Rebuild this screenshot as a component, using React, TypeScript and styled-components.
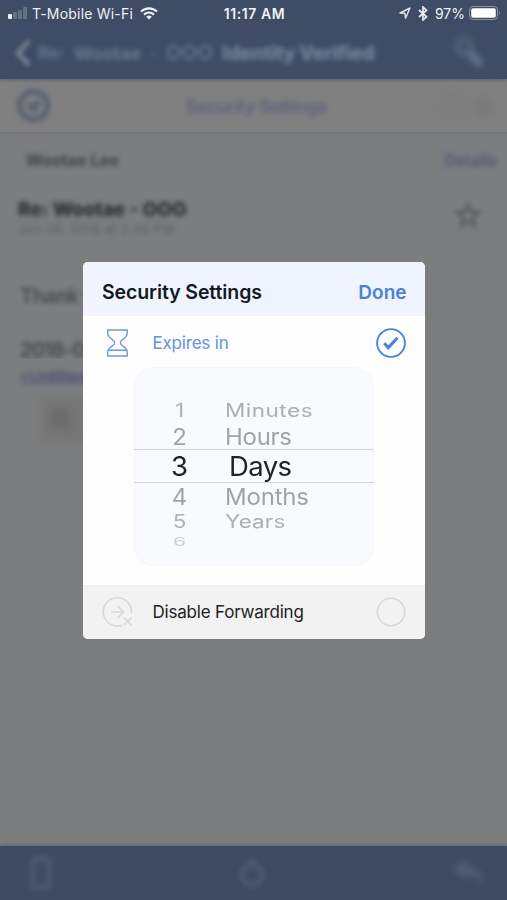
import React from "react";
import styled, { createGlobalStyle, css } from "styled-components";

const Global = createGlobalStyle`
  * { box-sizing: border-box; }
  html, body { margin: 0; padding: 0; overflow: hidden; }
  body { font-family: Inter, "Liberation Sans", sans-serif; background: #7c7d7f; }
  svg { display: block; flex: none; }
`;

const Screen = styled.div`
  position: relative;
  width: 507px;
  height: 900px;
  display: flex;
  flex-direction: column;
  overflow: hidden;
  background: #7c7d7f;
`;

/* ---------- status bar ---------- */
const StatusBar = styled.header`
  display: grid;
  grid-template-columns: 1fr auto 1fr;
  align-items: center;
  height: 27px;
  flex: none;
  padding: 0 6px 1px 8px;
  background: #3f4c66;
  color: #eef1f5;
  font-size: 14px;
`;

const StatusGroup = styled.div<{ $end?: boolean }>`
  display: flex;
  align-items: center;
  justify-content: ${(p) => (p.$end ? "flex-end" : "flex-start")};
`;

const Signal = styled.div`
  display: flex;
  align-items: flex-end;
  gap: 1px;
  margin-right: 5px;
`;

const SignalBar = styled.i<{ $h: number; $on?: boolean }>`
  width: 4px;
  height: ${(p) => p.$h}px;
  border-radius: 1px;
  background: ${(p) => (p.$on ? "#eef1f5" : "#66727f")};
`;

const StatusText = styled.span<{ $spacing?: number; $weight?: number; $gap?: number }>`
  letter-spacing: ${(p) => p.$spacing ?? 0}px;
  font-weight: ${(p) => p.$weight ?? 400};
  margin-right: ${(p) => p.$gap ?? 0}px;
  white-space: nowrap;
`;

const Bluetooth = styled.svg`
  margin: 0 7px;
`;

/* ---------- blurred mail view ---------- */
const NavBar = styled.nav`
  display: flex;
  align-items: center;
  height: 52px;
  flex: none;
  padding: 0 20px 0 13px;
  background: #3f4c66;
  box-shadow: 0 0 5px #46506a;
  z-index: 1;
`;

const Soft = styled.span<{
  $size?: number;
  $weight?: number;
  $color?: string;
  $spacing?: number;
  $blur?: number;
}>`
  display: block;
  white-space: nowrap;
  font-size: ${(p) => p.$size ?? 17}px;
  font-weight: ${(p) => p.$weight ?? 400};
  color: ${(p) => p.$color ?? "#66778a"};
  letter-spacing: ${(p) => p.$spacing ?? 0}px;
  filter: blur(${(p) => p.$blur ?? 2.8}px);
`;

const NavTitle = styled.div`
  flex: 1;
  display: flex;
  align-items: center;
  gap: 9px;
  margin-left: 5px;
`;

const ToolRow = styled.div`
  display: grid;
  grid-template-columns: 1fr auto 1fr;
  align-items: center;
  height: 53px;
  flex: none;
  padding: 1px 10px 0 15px;
  background: #808081;
  box-shadow: 0 1px 3px #6d7077;
`;

const ToolEnd = styled.div`
  display: flex;
  justify-content: flex-end;
`;

const SenderRow = styled.div`
  display: flex;
  align-items: center;
  justify-content: space-between;
  height: 56px;
  flex: none;
  padding: 0 10px 0 26px;
  border-bottom: 1px solid #797a7f;
`;

const SubjectRow = styled.div`
  display: flex;
  justify-content: space-between;
  height: 63px;
  flex: none;
  padding: 10px 24px 0 18px;
  border-bottom: 1px solid #797b7e;
`;

const Message = styled.main`
  flex: 1;
  padding: 25px 0 0 12px;
`;

const Line = styled.div<{ $h: number }>`
  width: 71px;
  height: ${(p) => p.$h}px;
  padding: 8px 0 0 8px;
  overflow: hidden;
`;

const Attachment = styled.div`
  display: flex;
  align-items: center;
  width: 250px;
  height: 48px;
  margin: 8px 0 0 28px;
  padding-left: 8px;
  background: #777777;
  filter: blur(3px);
`;

const BottomBar = styled.footer`
  display: flex;
  align-items: center;
  justify-content: space-between;
  height: 54px;
  flex: none;
  padding: 0 20px 0 27px;
  background: #3f4a63;
  box-shadow: 0 0 4px #46526a;
`;

const SoftIcon = styled.svg<{ $blur?: number }>`
  filter: blur(${(p) => p.$blur ?? 2.8}px);
  fill: none;
`;

/* ---------- dialog ---------- */
const Dialog = styled.section`
  position: absolute;
  left: 82.5px;
  top: 262px;
  width: 342.5px;
  height: 376.5px;
  display: flex;
  flex-direction: column;
  overflow: hidden;
  border-radius: 5px;
  background: #fefefe;
  z-index: 2;
`;

const DialogHead = styled.div`
  display: flex;
  align-items: center;
  justify-content: space-between;
  height: 54px;
  flex: none;
  padding: 5px 18.5px 0 19.5px;
  background: #eff4fe;
`;

const Heading = styled.h1`
  margin: 0;
  font-size: 19.5px;
  font-weight: 600;
  letter-spacing: -0.1px;
  color: #151823;
`;

const DoneButton = styled.button`
  border: 0;
  padding: 1px 0 0;
  background: none;
  font: 600 19px Inter, sans-serif;
  color: #4a82d8;
`;

const OptionRow = styled.div<{ $muted?: boolean }>`
  display: flex;
  align-items: center;
  height: ${(p) => (p.$muted ? 54 : 51)}px;
  flex: none;
  padding: ${(p) => (p.$muted ? 0 : 2)}px 19px 0 19.5px;
  ${(p) =>
    p.$muted &&
    css`
      margin-top: auto;
      background: #f2f2f2;
      border-top: 1px solid #ededed;
    `}
`;

const OptionIcon = styled.div`
  width: 50.5px;
`;

const OptionLabel = styled.span<{ $color: string; $spacing?: number }>`
  flex: 1;
  font-size: 17px;
  letter-spacing: ${(p) => p.$spacing ?? 0}px;
  color: ${(p) => p.$color};
`;

const Picker = styled.div`
  width: 240px;
  height: 199px;
  margin-left: 51.5px;
  padding-top: 31px;
  border-radius: 20px;
  background: #f9fafe;
  box-shadow: inset 0 0 0 1px #f6f7fb;
`;

const PickerRow = styled.div<{ $h: number; $active?: boolean }>`
  display: flex;
  align-items: center;
  height: ${(p) => p.$h}px;
  padding-top: 1px;
  ${(p) =>
    p.$active &&
    css`
      border-top: 1.5px solid #d3d4d7;
      border-bottom: 1.5px solid #d3d4d7;
    `}
`;

const Cell = styled.span<{
  $width?: number;
  $size: number;
  $color: string;
  $flat?: number;
  $center?: boolean;
  $pad?: number;
  $spacing?: number;
}>`
  display: block;
  width: ${(p) => (p.$width ? p.$width + "px" : "auto")};
  padding-left: ${(p) => p.$pad ?? 0}px;
  text-align: ${(p) => (p.$center ? "center" : "left")};
  font-size: ${(p) => p.$size}px;
  line-height: 1;
  letter-spacing: ${(p) => p.$spacing ?? 0}px;
  color: ${(p) => p.$color};
  transform: scaleY(${(p) => p.$flat ?? 1});
`;

type Row = {
  n: string;
  unit: string;
  h: number;
  size: number;
  color: string;
  flat: number;
  pad?: number;
  spacing?: number;
  active?: boolean;
};

const rows: Row[] = [
  { n: "1", unit: "Minutes", h: 26, size: 22.5, color: "#adafb3", flat: 0.8, spacing: 0.5 },
  { n: "2", unit: "Hours", h: 25, size: 24, color: "#a1a3a7", flat: 0.94, spacing: -0.3 },
  { n: "3", unit: "Days", h: 34, size: 27.5, color: "#222327", flat: 0.98, pad: 4, spacing: -0.6, active: true },
  { n: "4", unit: "Months", h: 26, size: 24, color: "#a1a3a7", flat: 0.94, spacing: -0.2 },
  { n: "5", unit: "Years", h: 26, size: 22.5, color: "#adafb3", flat: 0.8, spacing: 0.1 },
  { n: "6", unit: "", h: 12, size: 21, color: "#cecfd3", flat: 0.57 },
];

export default function App() {
  return (
    <>
      <Global />
      <Screen>
        <StatusBar>
          <StatusGroup>
            <Signal>
              <SignalBar $h={5} $on />
              <SignalBar $h={7} />
              <SignalBar $h={9} />
              <SignalBar $h={12} />
            </Signal>
            <StatusText $spacing={0.2} $gap={7}>T-Mobile Wi-Fi</StatusText>
            <svg width="18" height="13" viewBox="0 0 18 13">
              <g fill="none" stroke="#eef1f5" strokeWidth="2.2">
                <path d="M1 4.5C5.6.2 12.4.2 17 4.5" />
                <path d="M4 7.6C6.9 5 11.1 5 14 7.6" />
              </g>
              <path d="M9 12.6 6.1 9.7Q9 7.5 11.9 9.7Z" fill="#eef1f5" />
            </svg>
          </StatusGroup>
          <StatusText $weight={600} $spacing={0.6}>11:17 AM</StatusText>
          <StatusGroup $end>
            <svg width="12" height="12" viewBox="0 0 12 12">
              <path d="M1 6 11 1 6.5 11.2 5.9 6.2Z" fill="none" stroke="#e0e4ea" strokeWidth="1.4" strokeLinejoin="round" />
            </svg>
            <Bluetooth width="10" height="15" viewBox="0 0 10 15">
              <path d="M1 4 8.5 10.8 5 14V1L8.5 4.2 1 11" fill="none" stroke="#e8ebf0" strokeWidth="1.7" />
            </Bluetooth>
            <StatusText $gap={4}>97%</StatusText>
            <svg width="32" height="14" viewBox="0 0 32 14">
              <rect x=".5" y=".5" width="28" height="13" rx="3.4" fill="none" stroke="#8993a2" />
              <rect x="2.2" y="2.2" width="24.6" height="9.6" rx="1.8" fill="#fff" />
              <path d="M30 4.8q1.6 2.2 0 4.4z" fill="#8993a2" />
            </svg>
          </StatusGroup>
        </StatusBar>

        <NavBar>
          <SoftIcon $blur={2.2} width="20" height="28" viewBox="0 0 20 28">
            <path d="M16 2 5 14 16 26" stroke="#76838f" strokeWidth="4.5" />
          </SoftIcon>
          <NavTitle>
            <Soft $weight={700} $size={17}>Re:</Soft>
            <Soft $weight={700} $size={18} $color="#6c7a8a">Wootae</Soft>
            <Soft $weight={600} $size={14}>-</Soft>
            <Soft $weight={600} $size={20} $spacing={0.4}>OOO</Soft>
            <Soft $weight={800} $size={19.5} $color="#77869a" $spacing={-0.25}>Identity Verified</Soft>
          </NavTitle>
          <SoftIcon $blur={3.4} width="34" height="34" viewBox="0 0 34 34">
            <circle cx="11" cy="10" r="7" stroke="#56647a" strokeWidth="5" />
            <path d="m17 17 11 12" stroke="#65738a" strokeWidth="8" />
          </SoftIcon>
        </NavBar>

        <ToolRow>
          <SoftIcon $blur={2.4} width="37" height="37" viewBox="0 0 37 37">
            <circle cx="18.5" cy="17.5" r="14" stroke="#58616f" strokeWidth="5.5" />
            <path d="m13 16 5.5 5 5.5-8" stroke="#58616f" strokeWidth="6" />
          </SoftIcon>
          <Soft $size={18} $weight={600} $color="#5c6079" $spacing={-0.5} $blur={2.6}>Security Settings</Soft>
          <ToolEnd>
            <SoftIcon $blur={3.5} width="60" height="32" viewBox="0 0 60 32">
              <circle cx="16" cy="16" r="11" stroke="#7a7a7c" strokeWidth="3" />
              <circle cx="46" cy="16" r="10" fill="#7a7a7c" />
            </SoftIcon>
          </ToolEnd>
        </ToolRow>

        <SenderRow>
          <Soft $size={16} $weight={700} $color="#404247" $spacing={0.1}>Wootae Lee</Soft>
          <Soft $size={16} $weight={700} $color="#565a75" $spacing={-0.2}>Details</Soft>
        </SenderRow>

        <SubjectRow>
          <div>
            <Soft $size={19} $weight={800} $color="#2b2d32" $blur={2.7}>Re: Wootae - OOO</Soft>
            <Soft $size={13} $color="#5c5e61" $blur={2.5} $spacing={0.3}>Jun 26, 2018 at 2:46 PM</Soft>
          </div>
          <SoftIcon $blur={2.3} width="30" height="32" viewBox="0 0 24 26">
            <path d="m12 6 2.6 5 5.6.9-4.2 4 1.1 5.9-5.1-2.8-5.1 2.8L8 15.9l-4.2-4 5.6-.9Z" stroke="#606569" strokeWidth="3.4" />
          </SoftIcon>
        </SubjectRow>

        <Message>
          <Line $h={54}><Soft $size={20} $weight={600} $color="#48494b" $spacing={-0.4}>Thank y</Soft></Line>
          <Line $h={29}><Soft $size={20} $weight={600} $color="#454648" $spacing={-0.8}>2018-0</Soft></Line>
          <Line $h={29}><Soft $size={15} $weight={600} $color="#454c70" $blur={2.5}><u>&lt;Untitled</u></Soft></Line>
          <Attachment>
            <SoftIcon $blur={2} width="26" height="26" viewBox="0 0 26 26">
              <path d="M2 5h20M2 12h20M2 19h10M15 17l7 6" stroke="#636464" strokeWidth="4" />
            </SoftIcon>
          </Attachment>
        </Message>

        <BottomBar>
          <SoftIcon width="28" height="40" viewBox="0 0 28 40">
            <path d="M6 7h16v27H6zM8 5h12" stroke="#4c5a6f" strokeWidth="5" />
          </SoftIcon>
          <SoftIcon width="46" height="40" viewBox="0 0 34 40">
            <path d="M17 5v10" stroke="#4c5970" strokeWidth="7" />
            <circle cx="17" cy="22" r="10" stroke="#4c5970" strokeWidth="6" />
          </SoftIcon>
          <SoftIcon $blur={3.3} width="38" height="36" viewBox="0 0 38 36">
            <path d="M3 14 16 3v6q17 3 19 21-7-10-19-9v5Z" fill="#4e5b72" />
          </SoftIcon>
        </BottomBar>

        <Dialog>
          <DialogHead>
            <Heading>Security Settings</Heading>
            <DoneButton>Done</DoneButton>
          </DialogHead>
          <OptionRow>
            <OptionIcon>
              <svg width="32" height="30" viewBox="0 0 32 30">
                <g fill="none" stroke="#7298e0" strokeWidth="1.4" strokeLinejoin="round">
                  <path d="M5.7 2H25.3V4.5C25.3 11.5 18.3 11 18.3 14.7S25.3 18 25.3 24.5V28H5.7V24.5C5.7 18 12.7 18.4 12.7 14.7S5.7 11.5 5.7 4.5Z" />
                  <path d="M5.8 22.3H25.2" />
                </g>
              </svg>
            </OptionIcon>
            <OptionLabel $color="#6592dd" $spacing={-0.2}>Expires in</OptionLabel>
            <svg width="30" height="30" viewBox="0 0 30 30">
              <g fill="none" stroke="#4a83d9">
                <circle cx="15" cy="15" r="13.9" strokeWidth="1.9" />
                <path d="m8.3 15.2 4 4.4 9.2-9.8" strokeWidth="3.1" />
              </g>
            </svg>
          </OptionRow>
          <Picker>
            {rows.map((r) => (
              <PickerRow key={r.n} $h={r.h} $active={r.active}>
                <Cell $width={91} $center $size={r.size} $flat={r.flat} $color={r.color}>{r.n}</Cell>
                <Cell $size={r.size} $flat={r.flat} $color={r.color} $pad={r.pad} $spacing={r.spacing}>{r.unit}</Cell>
              </PickerRow>
            ))}
          </Picker>
          <OptionRow $muted>
            <OptionIcon>
              <svg width="32" height="32" viewBox="0 0 32 32">
                <g fill="none" stroke="#d8d8d8" strokeWidth="1.5">
                  <path d="M29.5 17.5A14.2 14.2 0 1 0 20 29.3" />
                  <path d="M9.5 16H21M15.5 10l6 6-6 6M22 21.5l7.5 7.5M29.5 21.5 22 29" />
                </g>
              </svg>
            </OptionIcon>
            <OptionLabel $color="#222" $spacing={-0.2}>Disable Forwarding</OptionLabel>
            <svg width="30" height="30" viewBox="0 0 30 30">
              <circle cx="15" cy="15" r="13.7" fill="none" stroke="#d9d9d9" strokeWidth="1.6" />
            </svg>
          </OptionRow>
        </Dialog>
      </Screen>
    </>
  );
}
